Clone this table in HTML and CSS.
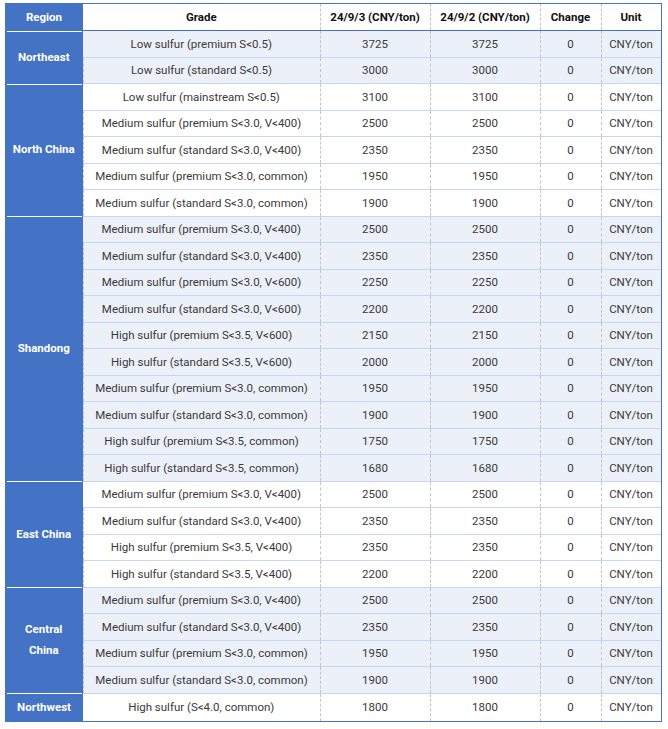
FILE: index.html
```html
<!DOCTYPE html>
<html>
<head>
<meta charset="utf-8">
<link rel="stylesheet" href="styles.css">
</head>
<body>
<table class="prices">
  <colgroup>
    <col class="c-region"><col class="c-grade"><col class="c-d1"><col class="c-d2"><col class="c-chg"><col class="c-unit">
  </colgroup>
  <thead>
    <tr><th class="region">Region</th><th>Grade</th><th>24/9/3 (CNY/ton)</th><th>24/9/2 (CNY/ton)</th><th>Change</th><th>Unit</th></tr>
  </thead>
  <tbody class="shade">
    <tr><td class="region first" rowspan="2">Northeast</td><td>Low sulfur (premium S&lt;0.5)</td><td>3725</td><td>3725</td><td>0</td><td>CNY/ton</td></tr>
    <tr><td>Low sulfur (standard S&lt;0.5)</td><td>3000</td><td>3000</td><td>0</td><td>CNY/ton</td></tr>
  </tbody>
  <tbody class="plain">
    <tr><td class="region" rowspan="5">North China</td><td>Low sulfur (mainstream S&lt;0.5)</td><td>3100</td><td>3100</td><td>0</td><td>CNY/ton</td></tr>
    <tr><td>Medium sulfur (premium S&lt;3.0, V&lt;400)</td><td>2500</td><td>2500</td><td>0</td><td>CNY/ton</td></tr>
    <tr><td>Medium sulfur (standard S&lt;3.0, V&lt;400)</td><td>2350</td><td>2350</td><td>0</td><td>CNY/ton</td></tr>
    <tr><td>Medium sulfur (premium S&lt;3.0, common)</td><td>1950</td><td>1950</td><td>0</td><td>CNY/ton</td></tr>
    <tr><td>Medium sulfur (standard S&lt;3.0, common)</td><td>1900</td><td>1900</td><td>0</td><td>CNY/ton</td></tr>
  </tbody>
  <tbody class="shade">
    <tr><td class="region" rowspan="10">Shandong</td><td>Medium sulfur (premium S&lt;3.0, V&lt;400)</td><td>2500</td><td>2500</td><td>0</td><td>CNY/ton</td></tr>
    <tr><td>Medium sulfur (standard S&lt;3.0, V&lt;400)</td><td>2350</td><td>2350</td><td>0</td><td>CNY/ton</td></tr>
    <tr><td>Medium sulfur (premium S&lt;3.0, V&lt;600)</td><td>2250</td><td>2250</td><td>0</td><td>CNY/ton</td></tr>
    <tr><td>Medium sulfur (standard S&lt;3.0, V&lt;600)</td><td>2200</td><td>2200</td><td>0</td><td>CNY/ton</td></tr>
    <tr><td>High sulfur (premium S&lt;3.5, V&lt;600)</td><td>2150</td><td>2150</td><td>0</td><td>CNY/ton</td></tr>
    <tr><td>High sulfur (standard S&lt;3.5, V&lt;600)</td><td>2000</td><td>2000</td><td>0</td><td>CNY/ton</td></tr>
    <tr><td>Medium sulfur (premium S&lt;3.0, common)</td><td>1950</td><td>1950</td><td>0</td><td>CNY/ton</td></tr>
    <tr><td>Medium sulfur (standard S&lt;3.0, common)</td><td>1900</td><td>1900</td><td>0</td><td>CNY/ton</td></tr>
    <tr><td>High sulfur (premium S&lt;3.5, common)</td><td>1750</td><td>1750</td><td>0</td><td>CNY/ton</td></tr>
    <tr><td>High sulfur (standard S&lt;3.5, common)</td><td>1680</td><td>1680</td><td>0</td><td>CNY/ton</td></tr>
  </tbody>
  <tbody class="plain">
    <tr><td class="region" rowspan="4">East China</td><td>Medium sulfur (premium S&lt;3.0, V&lt;400)</td><td>2500</td><td>2500</td><td>0</td><td>CNY/ton</td></tr>
    <tr><td>Medium sulfur (standard S&lt;3.0, V&lt;400)</td><td>2350</td><td>2350</td><td>0</td><td>CNY/ton</td></tr>
    <tr><td>High sulfur (premium S&lt;3.5, V&lt;400)</td><td>2350</td><td>2350</td><td>0</td><td>CNY/ton</td></tr>
    <tr><td>High sulfur (standard S&lt;3.5, V&lt;400)</td><td>2200</td><td>2200</td><td>0</td><td>CNY/ton</td></tr>
  </tbody>
  <tbody class="shade">
    <tr><td class="region" rowspan="4">Central<br>China</td><td>Medium sulfur (premium S&lt;3.0, V&lt;400)</td><td>2500</td><td>2500</td><td>0</td><td>CNY/ton</td></tr>
    <tr><td>Medium sulfur (standard S&lt;3.0, V&lt;400)</td><td>2350</td><td>2350</td><td>0</td><td>CNY/ton</td></tr>
    <tr><td>Medium sulfur (premium S&lt;3.0, common)</td><td>1950</td><td>1950</td><td>0</td><td>CNY/ton</td></tr>
    <tr><td>Medium sulfur (standard S&lt;3.0, common)</td><td>1900</td><td>1900</td><td>0</td><td>CNY/ton</td></tr>
  </tbody>
  <tbody class="plain last">
    <tr><td class="region" rowspan="1">Northwest</td><td>High sulfur (S&lt;4.0, common)</td><td>1800</td><td>1800</td><td>0</td><td>CNY/ton</td></tr>
  </tbody>
</table>
</body>
</html>
```

FILE: styles.css
```css
html, body { margin: 0; padding: 0; background: #fff; }
body { padding: 3px 0 0 5px; }
.prices {
  border-collapse: collapse;
  table-layout: fixed;
  width: 656px;
  font-family: Roboto, "Noto Sans", sans-serif;
  font-size: 11.5px;
  color: #3a3a3a;
}
.c-region { width: 78px; }
.c-grade { width: 237px; }
.c-d1 { width: 110px; }
.c-d2 { width: 110px; }
.c-chg { width: 61px; }
.c-unit { width: 60px; }

.prices th, .prices td {
  text-align: center;
  vertical-align: middle;
  padding: 0;
  white-space: nowrap;
}
.prices thead th {
  height: 26px;
  font-weight: bold;
  color: #111;
  border-top: 1px solid #4472c4;
  border-bottom: 1px solid #4472c4;
  border-left: 1px dashed #c4c4c4;
}
.prices thead th:last-child { border-right: 1px solid #4472c4; }
.prices td {
  height: 25.5px;
  border-top: 1px solid #c8d5ee;
  border-left: 1px dashed #c4c4c4;
}
.prices .last td { height: 27.5px; }
.prices tr td:last-child { border-right: 1px solid #4472c4; }
.prices tbody:last-child tr:last-child td { border-bottom: 1px solid #4472c4; }
.shade td { background: #ecf0f8; }
.plain td { background: #fff; }

.prices th.region, .prices td.region {
  background: #4472c4;
  color: #fff;
  font-weight: bold;
  border: none;
  line-height: 21px;
}
.prices td.region {
  background: linear-gradient(#fff, #fff) no-repeat 2px 0 / 75px 1px, #4472c4;
}
.prices th.region { border-top: 1px solid #4472c4; border-bottom: 1px solid #4472c4; }
.prices td.region + td { border-left: none; }
.prices th.region + th { border-left: none; }
```
